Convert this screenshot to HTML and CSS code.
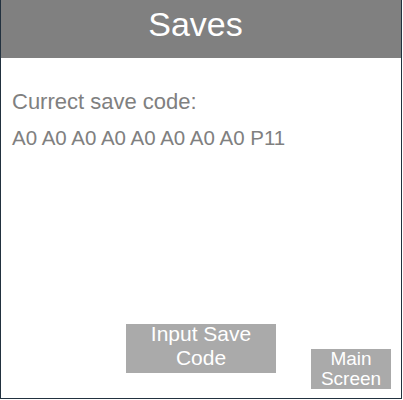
FILE: index.html
```html
<!DOCTYPE html>
<html>
<head>
<meta charset="utf-8">
<link rel="stylesheet" href="styles.css">
</head>
<body>
<div class="frame">
  <div class="header">Saves</div>
  <div class="content">
    <p class="label">Currect save code:</p>
    <p class="code">A0 A0 A0 A0 A0 A0 A0 A0 P11</p>
  </div>
  <div class="actions">
    <div class="btn btn-input"><span class="btn-text">Input Save<br>Code</span></div>
    <div class="btn btn-main"><span class="btn-text">Main<br>Screen</span></div>
  </div>
</div>
</body>
</html>
```
FILE: styles.css
```css
html, body {
  margin: 0;
  padding: 0;
  background: #ffffff;
}
body {
  font-family: "Liberation Sans", Arial, sans-serif;
}
.frame {
  width: 400px;
  height: 398px;
  border: 1px solid #22313f;
  border-top: none;
  display: flex;
  flex-direction: column;
  background: #ffffff;
}
.header {
  height: 58px;
  background: #808080;
  color: #ffffff;
  font-size: 34px;
  line-height: 48px;
  text-align: center;
  padding-right: 11px;
}
.content {
  flex: 1;
  padding: 30px 0 0 11px;
  color: #808080;
}
.label {
  margin: 0;
  font-size: 22px;
  line-height: 28px;
}
.code {
  margin: 8px 0 0;
  font-size: 20.5px;
  line-height: 28px;
}
.actions {
  display: flex;
  align-items: flex-end;
  padding: 0 0 9px 125px;
  gap: 35px;
}
.btn {
  background: #aaaaaa;
  color: #ffffff;
  text-align: center;
}
.btn-text {
  display: block;
}
.btn-input {
  width: 150px;
  height: 49px;
  font-size: 21px;
  line-height: 24px;
  margin-bottom: 16px;
}
.btn-input .btn-text {
  margin-top: -2px;
}
.btn-main {
  width: 80px;
  height: 40px;
  font-size: 19px;
  line-height: 20px;
}
```
